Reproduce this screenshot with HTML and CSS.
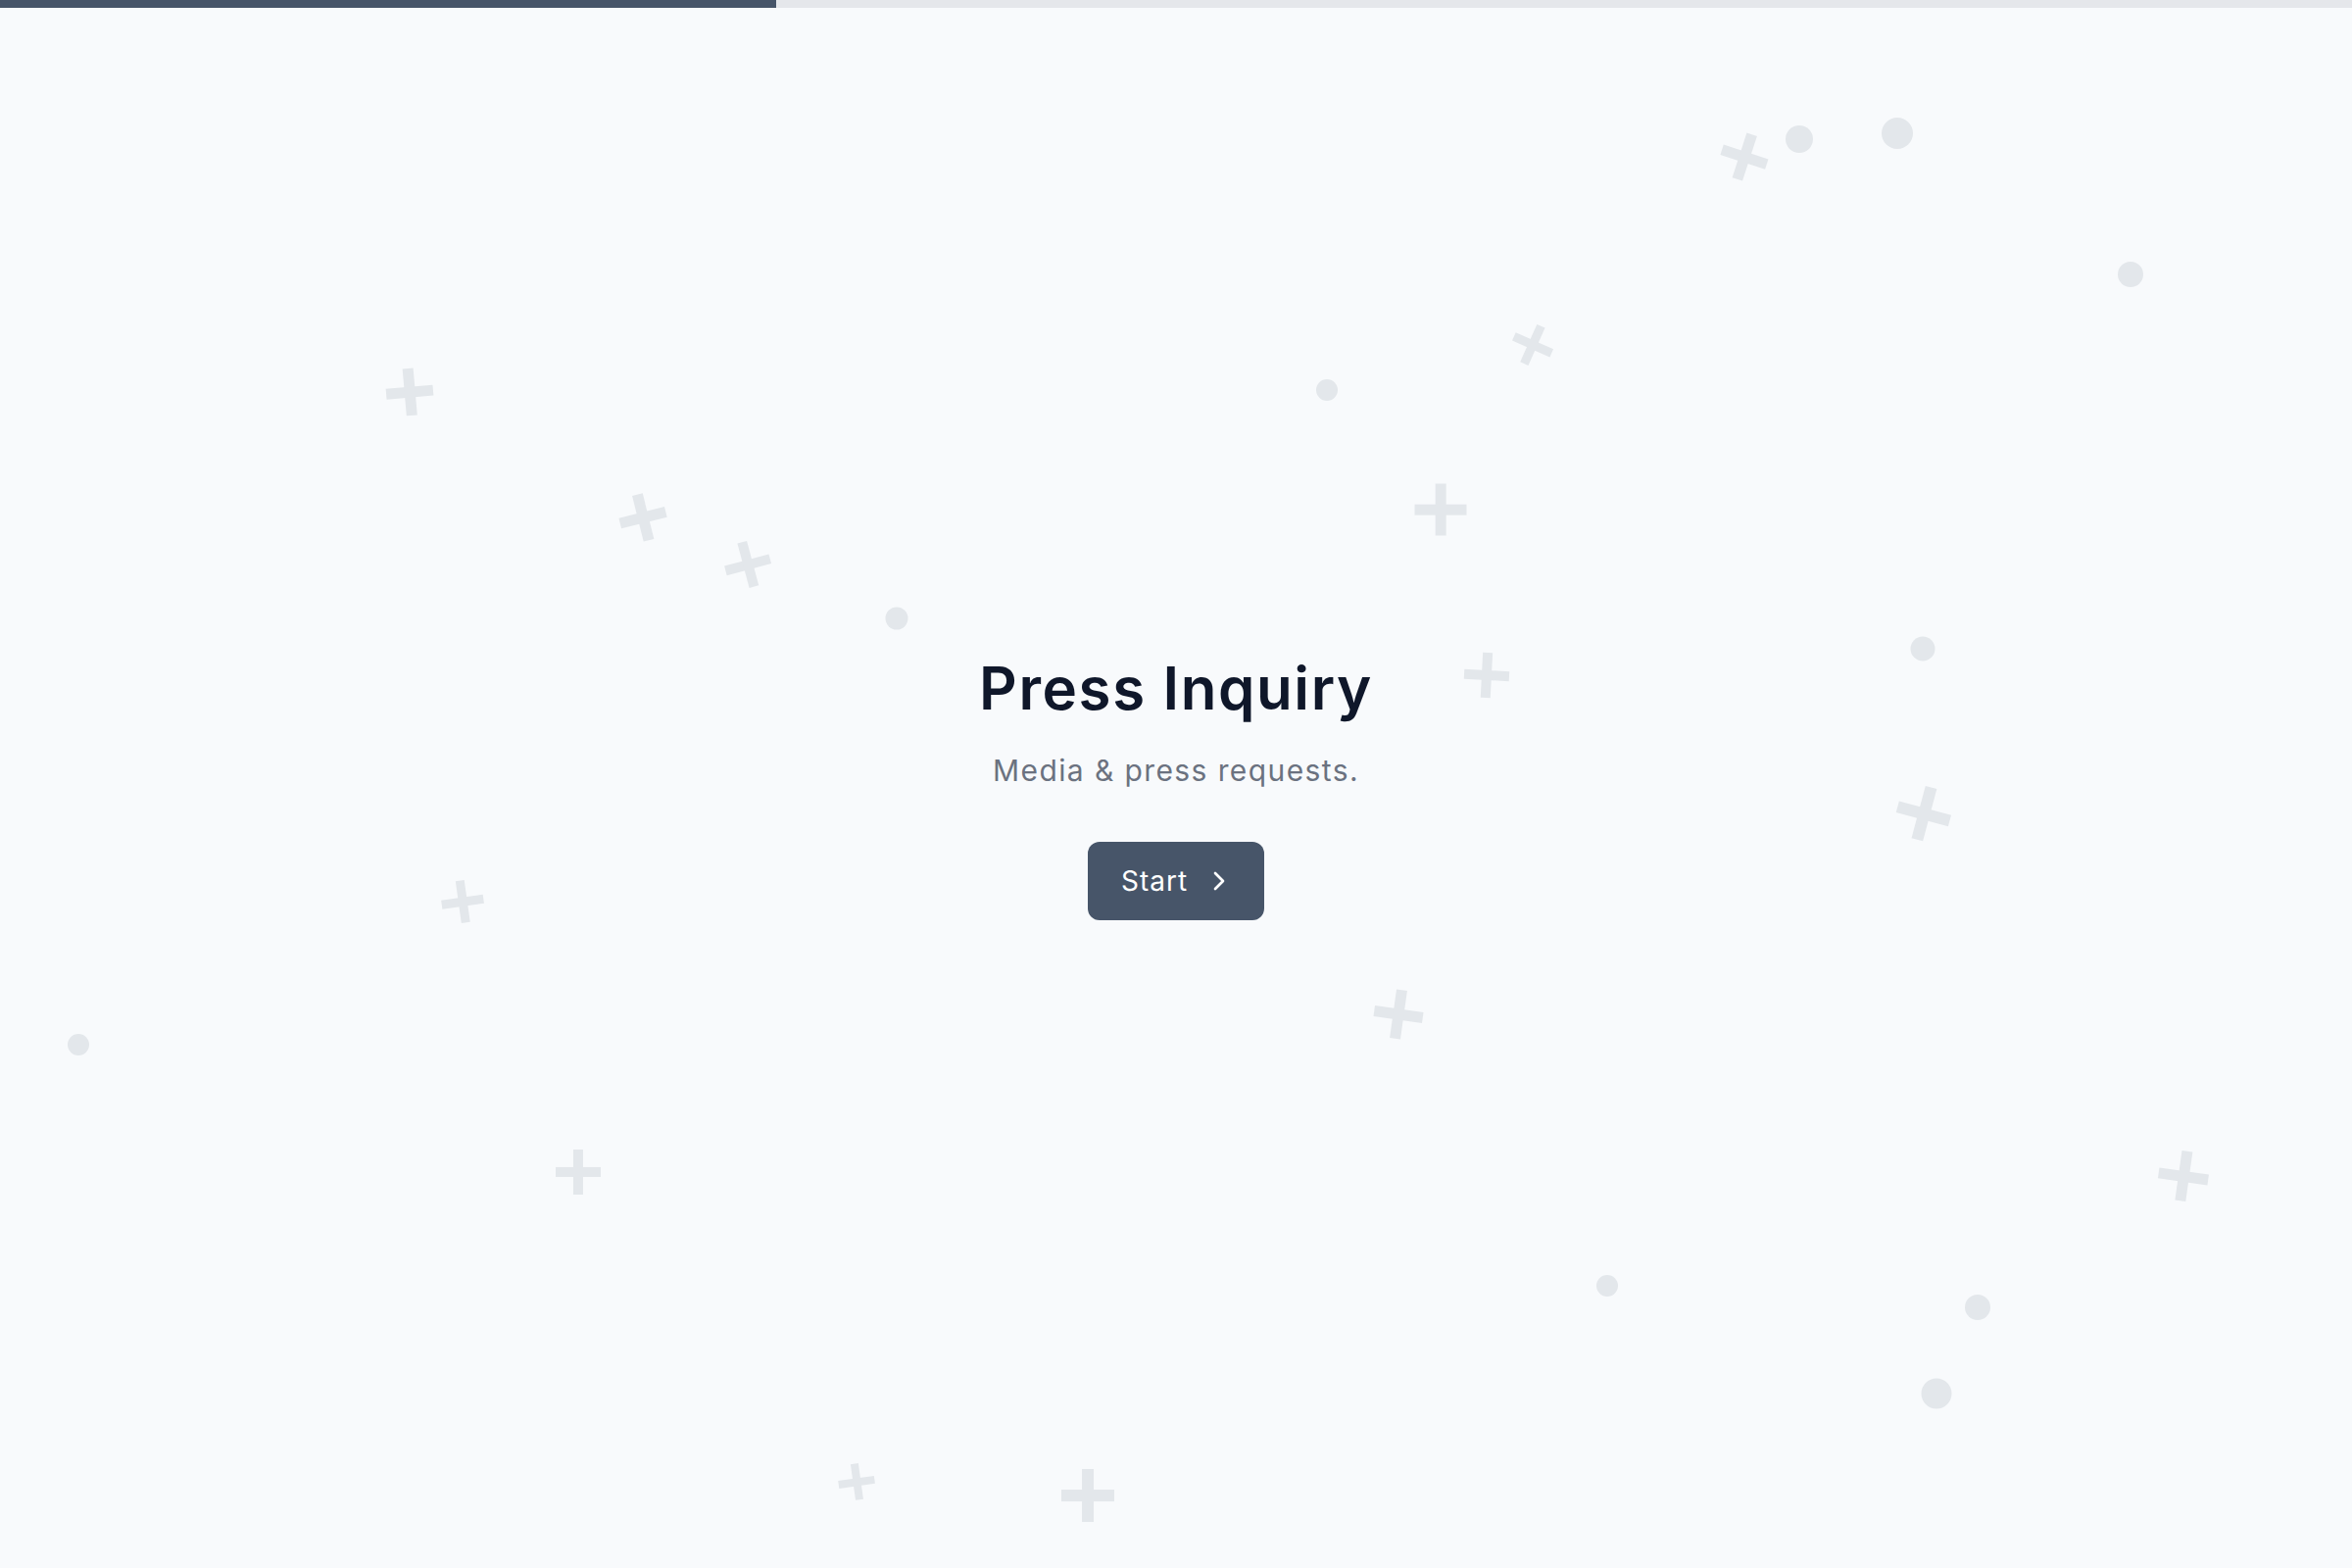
FILE: index.html
```html
<!DOCTYPE html>
<html lang="en">
<head>
<meta charset="utf-8">
<title>Press Inquiry</title>
<link rel="stylesheet" href="styles.css">
</head>
<body>
<div class="page">
  <div class="progress"><div class="progress-fill" style="width:33%"></div></div>

  <div class="decor" aria-hidden="true">
    <span class="plus" style="left:1780px;top:160px;--s:48px;--r:18deg"></span>
    <span class="plus" style="left:1564px;top:352px;--s:42px;--r:24deg"></span>
    <span class="plus" style="left:418px;top:400px;--s:48px;--r:-5deg"></span>
    <span class="plus" style="left:656px;top:528px;--s:48px;--r:-14deg"></span>
    <span class="plus" style="left:763px;top:576px;--s:47px;--r:-15deg"></span>
    <span class="plus" style="left:1470px;top:520px;--s:53px;--r:0deg"></span>
    <span class="plus" style="left:1517px;top:689px;--s:46px;--r:3deg"></span>
    <span class="plus" style="left:1963px;top:830px;--s:55px;--r:15deg"></span>
    <span class="plus" style="left:472px;top:920px;--s:43px;--r:-8deg"></span>
    <span class="plus" style="left:1427px;top:1035px;--s:50px;--r:8deg"></span>
    <span class="plus" style="left:590px;top:1196px;--s:46px;--r:0deg"></span>
    <span class="plus" style="left:2228px;top:1200px;--s:51px;--r:8deg"></span>
    <span class="plus" style="left:874px;top:1512px;--s:37px;--r:-8deg"></span>
    <span class="plus" style="left:1110px;top:1526px;--s:54px;--r:0deg"></span>

    <span class="dot" style="left:1836px;top:142px;--s:28px"></span>
    <span class="dot" style="left:1936px;top:136px;--s:32px"></span>
    <span class="dot" style="left:2174px;top:280px;--s:26px"></span>
    <span class="dot" style="left:1354px;top:398px;--s:22px"></span>
    <span class="dot" style="left:915px;top:631px;--s:23px"></span>
    <span class="dot" style="left:1962px;top:662px;--s:25px"></span>
    <span class="dot" style="left:80px;top:1066px;--s:22px"></span>
    <span class="dot" style="left:1640px;top:1312px;--s:22px"></span>
    <span class="dot" style="left:2018px;top:1334px;--s:26px"></span>
    <span class="dot" style="left:1976px;top:1422px;--s:31px"></span>
  </div>

  <main class="intro">
    <h1 class="intro-title">Press Inquiry</h1>
    <p class="intro-subtitle">Media &amp; press requests.</p>
    <button class="start-btn" type="button">
      <span class="start-label">Start</span>
      <svg class="start-icon" viewBox="0 0 24 24" fill="none" stroke="currentColor" stroke-width="2" stroke-linecap="round" stroke-linejoin="round"><path d="m9 18 6-6-6-6"/></svg>
    </button>
  </main>
</div>
</body>
</html>
```

FILE: styles.css
```css
* {
  box-sizing: border-box;
}

html,
body {
  margin: 0;
  height: 100%;
}

body {
  background: #f8fafc;
  font-family: "Inter", "Open Sans", "Liberation Sans", sans-serif;
  color: #0f172a;
}

.page {
  position: relative;
  min-height: 100vh;
  display: flex;
  flex-direction: column;
  overflow: hidden;
}

/* progress indicator along the top edge */
.progress {
  height: 8px;
  background: #e5e7eb;
  flex: none;
  position: relative;
  z-index: 2;
}

.progress-fill {
  height: 100%;
  background: #475569;
}

/* scattered background shapes */
.decor {
  position: absolute;
  inset: 0;
  pointer-events: none;
  z-index: 0;
}

.plus,
.dot {
  position: absolute;
  width: var(--s);
  height: var(--s);
  transform: translate(-50%, -50%) rotate(var(--r, 0deg));
}

.plus::before,
.plus::after {
  content: "";
  position: absolute;
  background: #e3e7eb;
}

.plus::before {
  left: 0;
  right: 0;
  top: 50%;
  height: calc(var(--s) * 0.22);
  transform: translateY(-50%);
}

.plus::after {
  top: 0;
  bottom: 0;
  left: 50%;
  width: calc(var(--s) * 0.22);
  transform: translateX(-50%);
}

.dot {
  border-radius: 50%;
  background: #e3e7eb;
}

/* centred intro block */
.intro {
  position: relative;
  z-index: 1;
  flex: 1;
  display: flex;
  flex-direction: column;
  align-items: center;
  justify-content: center;
  padding-bottom: 4px;
  text-align: center;
}

.intro-title {
  margin: 0;
  font-size: 60px;
  font-weight: 600;
  line-height: 72px;
  letter-spacing: 1.6px;
  color: #0f172a;
}

.intro-subtitle {
  margin: 28px 0 0;
  font-size: 30px;
  font-weight: 400;
  line-height: 40px;
  letter-spacing: 1.4px;
  color: #6b7280;
}

.start-btn {
  margin-top: 53px;
  display: flex;
  align-items: center;
  gap: 16px;
  height: 80px;
  padding: 0 30px 0 34px;
  border: none;
  border-radius: 12px;
  background: #475569;
  color: #ffffff;
  font-family: inherit;
  font-size: 28px;
  font-weight: 400;
  letter-spacing: 1px;
  cursor: pointer;
}

.start-icon {
  width: 32px;
  height: 32px;
  flex: none;
}
```
